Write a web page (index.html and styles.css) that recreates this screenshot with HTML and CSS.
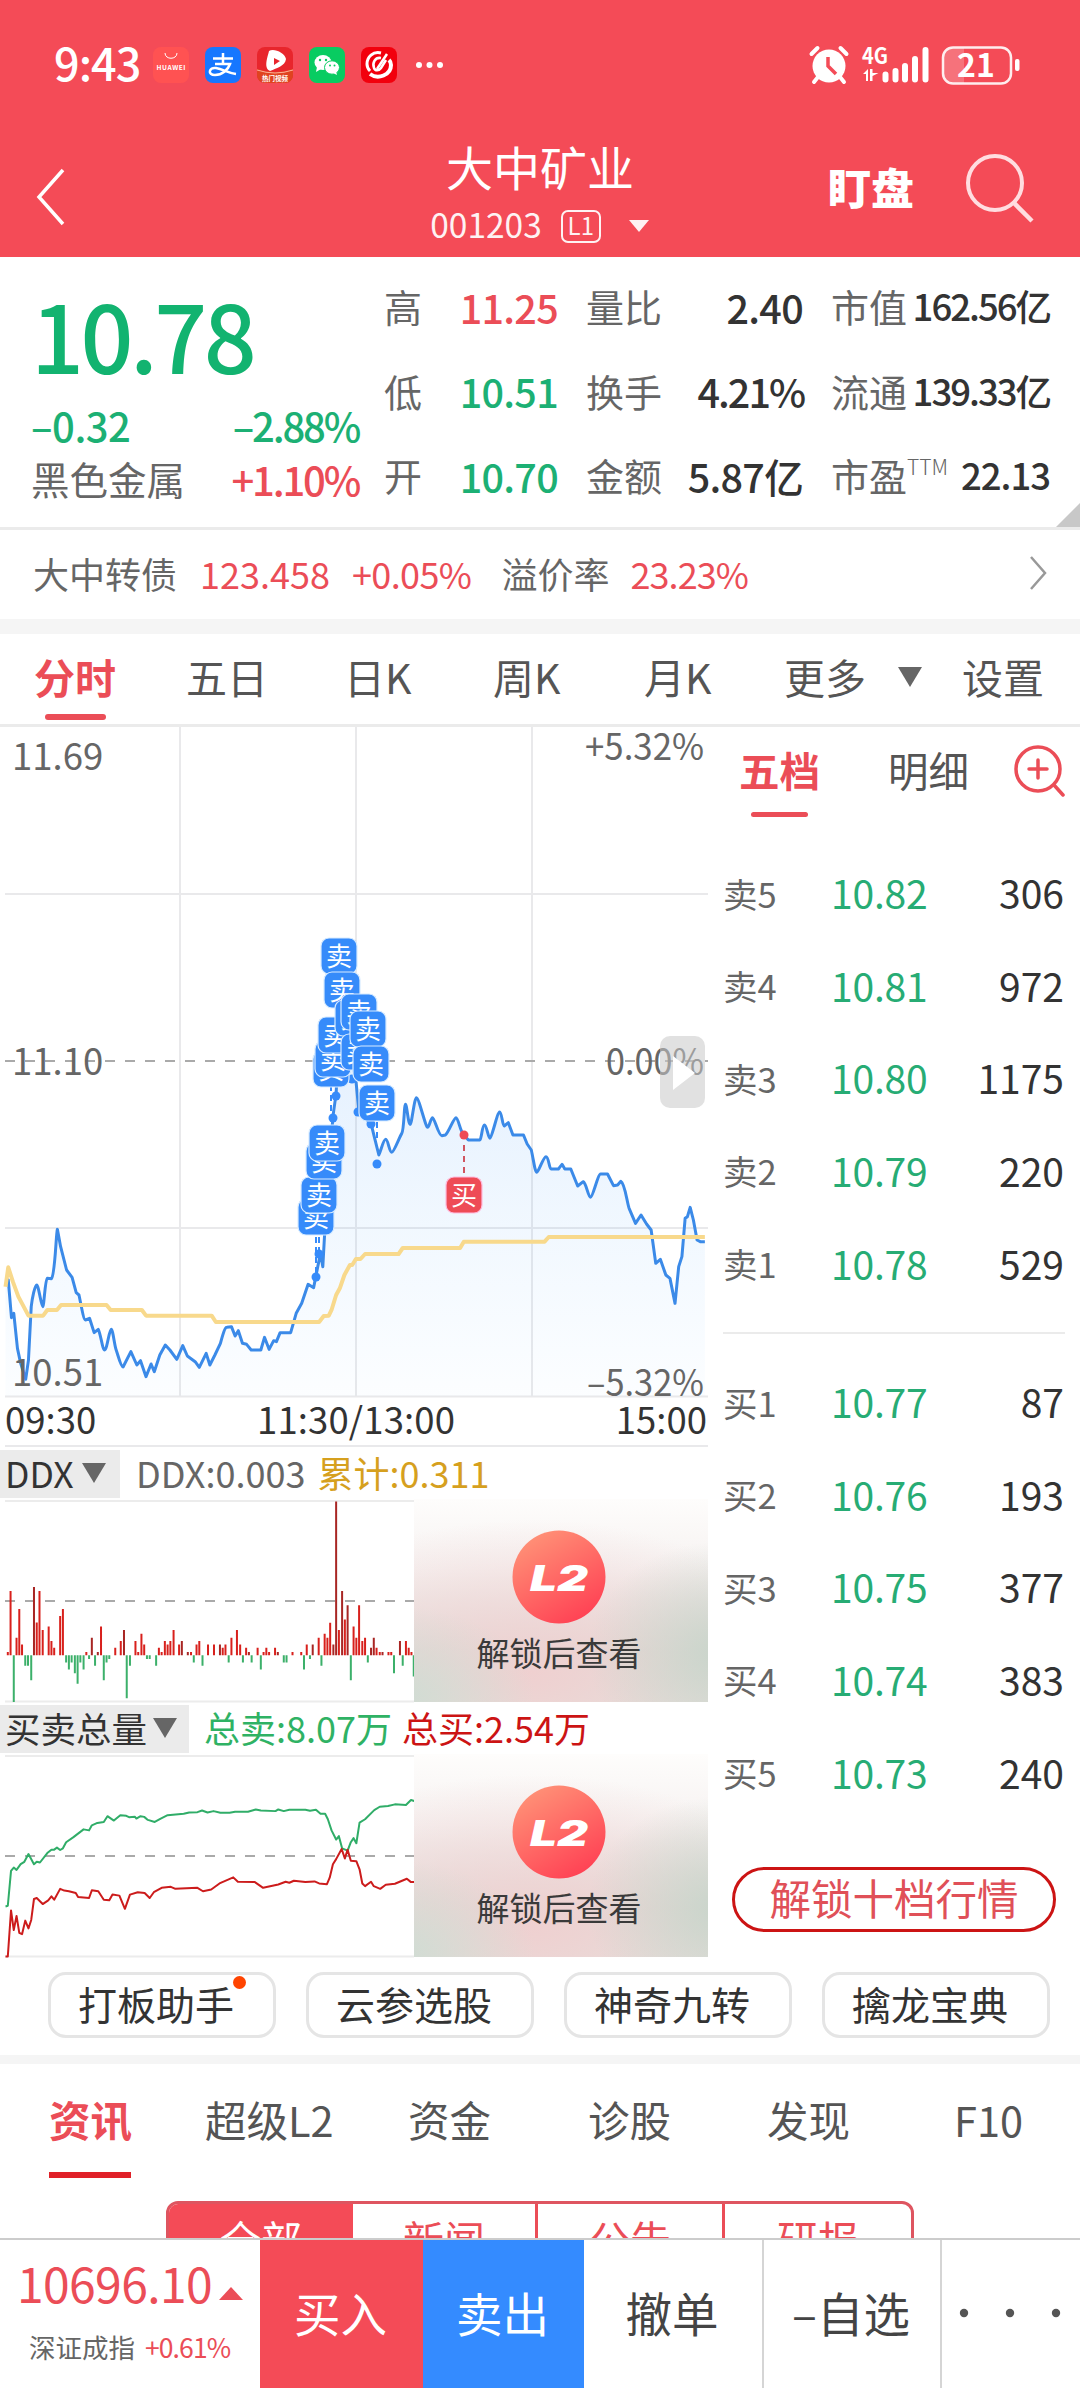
FILE: index.html
```html
<!DOCTYPE html>
<html lang="zh-CN">
<head>
<meta charset="utf-8">
<title>大中矿业 001203</title>
<link rel="stylesheet" href="styles.css">
</head>
<body>
<div class="app">
  <header class="head">
    <div class="status">
      <span class="clock">9:43</span>
      <div class="apps">
        <svg width="36" height="36" viewBox="0 0 36 36"><rect width="36" height="36" rx="8" fill="#ff5252"/><path d="M12 6c0 7 12 7 12 0" fill="none" stroke="#fff" stroke-width="1"/><text x="18" y="23" font-size="6.6" font-weight="700" fill="#fff" text-anchor="middle" textLength="29">HUAWEI</text></svg>
        <svg width="36" height="36" viewBox="0 0 36 36"><rect width="36" height="36" rx="8" fill="#1677ff"/><path d="M8 11.500h20M18 6v11M10 17h15c-2 6-8 11-15 11-8 0-6-8 1-7 7 1 12 5 20 6" fill="none" stroke="#fff" stroke-width="2.500"/></svg>
        <svg width="36" height="36" viewBox="0 0 36 36"><rect width="36" height="36" rx="8" fill="#e8252c"/><path d="M0 22q18 6 36 0v6a8 8 0 0 1-8 8H8a8 8 0 0 1-8-8z" fill="#e0431f"/><path d="M0 23q18 6 36 0" fill="none" stroke="#ffb199" stroke-width="1"/><path d="M12 4c5-3 16 2 17 8-1 7-9 9-16 12-7-3-2-15-1-20zm5 7v7l6-4z" fill="#fff" fill-rule="evenodd"/><text x="18" y="33.500" font-size="6.500" font-weight="700" fill="#fff" text-anchor="middle">热门视频</text></svg>
        <svg width="36" height="36" viewBox="0 0 36 36"><rect width="36" height="36" rx="8" fill="#08cc61"/><ellipse cx="14" cy="15.500" rx="8.500" ry="7.500" fill="#fff"/><path d="M8 20l-1 5 5-3z" fill="#fff"/><ellipse cx="23" cy="20.500" rx="7.500" ry="6.700" fill="#fff" stroke="#08cc61"/><path d="M24 26l4 2-1-4z" fill="#fff"/><g fill="#08cc61"><circle cx="11" cy="13" r="1.200"/><circle cx="17" cy="13" r="1.200"/><circle cx="21" cy="18.500" r="1"/><circle cx="25.500" cy="18.500" r="1"/></g></svg>
        <svg width="36" height="36" viewBox="0 0 36 36"><rect width="36" height="36" rx="8" fill="#f2000d"/><g fill="none" stroke="#fff"><path d="M20 6C12 4 6 10 6 17c0 3 1 5 3 7" stroke-width="3"/><path d="M9 27c8 6 21 1 21-9 0-3-1-4-2-5" stroke-width="4"/><path d="M20 11c-6-1-9 5-7 10 1 3 5 3 7 0l5-8" stroke-width="2.500"/><path d="M26 7L16 22" stroke-width="2.500"/></g></svg>
      </div>
      <svg class="more" width="30" height="8" viewBox="0 0 30 8"><g fill="#fff"><circle cx="4" cy="4" r="3"/><circle cx="14.500" cy="4" r="3"/><circle cx="25" cy="4" r="3"/></g></svg>
      <svg class="sys" width="212" height="42" viewBox="0 0 212 42">
        <g stroke="#fff" fill="none" stroke-linecap="round">
          <circle cx="20" cy="22" r="16.500" fill="#fff" stroke="none"/>
          <path d="M2.500 10l6-6M37.500 10l-6-6M9 33l-4 5M31 33l4 5" stroke-width="4"/>
          <path d="M19 13v9l8 8" stroke="#f44b57" stroke-width="3.500" stroke-linecap="butt"/>
          <path d="M76.500 30.500v5M86.500 27v8.500M96 22v13.500M106 15v20.500M116.500 6v29.500" stroke-width="6"/>
        </g>
        <text x="53" y="20" font-size="22" font-weight="700" fill="#fff" textLength="26" lengthAdjust="spacingAndGlyphs">4G</text>
        <path d="M54 30l5-5v12h-2V30zM61 25l0 12h2.500v-5l6-3h-6v-4z" fill="#fff"/>
        <path d="M155 4H144a10 10 0 0 0-10 10v15a10 10 0 0 0 10 10h11z" fill="#fff" opacity=".22"/>
        <rect x="134" y="3.500" width="68" height="36" rx="10" fill="none" stroke="#fff" stroke-width="2.500" opacity=".9"/>
        <rect x="206" y="15" width="4.500" height="12" rx="2" fill="#fff"/>
        <text x="167" y="33" font-size="32" font-weight="700" fill="#fff" text-anchor="middle">21</text>
      </svg>
    </div>
    <div class="nav">
      <svg class="back" width="32" height="60" viewBox="0 0 32 60"><path d="M28 3L4 30l24 27" fill="none" stroke="#fff" stroke-width="3.500"/></svg>
      <div class="title">
        <h1>大中矿业</h1>
        <div class="code"><span>001203</span><b class="lv">L1</b><i class="tri-w"></i></div>
      </div>
      <span class="watch">盯盘</span>
      <svg class="search" width="70" height="74" viewBox="0 0 70 74"><circle cx="29" cy="30" r="27" fill="none" stroke="#ffdde0" stroke-width="4"/><path d="M47 49l19 19" stroke="#ffdde0" stroke-width="4.500"/></svg>
    </div>
  </header>

  <section class="quote">
    <div class="main">
      <div class="price">10.78</div>
      <div class="pair green"><b>–0.32</b><b class="pc">–2.88%</b></div>
      <div class="pair"><span>黑色金属</span><b class="red pc">+1.10%</b></div>
    </div>
    <div class="stats">
      <div><span>高</span><b class="red">11.25</b></div><div><span>量比</span><b>2.40</b></div><div class="nar"><span>市值</span><b>162.56亿</b></div>
      <div><span>低</span><b class="green">10.51</b></div><div><span>换手</span><b class="pc">4.21%</b></div><div class="nar"><span>流通</span><b>139.33亿</b></div>
      <div><span>开</span><b class="green">10.70</b></div><div><span>金额</span><b>5.87亿</b></div><div class="nar"><span>市盈<sup>TTM</sup></span><b>22.13</b></div>
    </div>
    <i class="corner"></i>
  </section>
  <section class="bond">
    <span>大中转债</span><span class="red w1">123.458</span><span class="red w2">+0.05%</span><span class="w3">溢价率</span><span class="red w4">23.23%</span>
    <svg width="22" height="38" viewBox="0 0 22 38"><path d="M3 3l14 16L3 35" fill="none" stroke="#999" stroke-width="2.500"/></svg>
  </section>

  <nav class="periods">
    <b class="on">分时</b><span>五日</span><span>日K</span><span>周K</span><span>月K</span><span>更多</span><i class="tri-g"></i><span>设置</span>
  </nav>

  <div class="body">
    <div class="charts">
      <svg class="price-chart" width="708" height="720" viewBox="0 727 708 720">
        <defs><linearGradient id="area" x1="0" y1="0" x2="0" y2="1"><stop offset="0" stop-color="#358cf5" stop-opacity=".16"/><stop offset="1" stop-color="#58b0ff" stop-opacity=".02"/></linearGradient></defs>
        <path d="M180 727V1396M356 727V1396M532 727V1396M5 894H708M5 1228H708M5 1396.500H708M5 1446H708" stroke="#e9e9eb" stroke-width="2"/>
        <path d="M5 1061H708" stroke="#aaa" stroke-width="2" stroke-dasharray="10 10"/>
        <g transform="translate(0 1020) scale(.4592 .33333)" fill="none" stroke-linejoin="round">
          <path fill="url(#area)" d="M12 1128V800L18 780 25 893 30 880 38 985 45 1030 56 1078 62 1020 68 860 80 795 93 860 103 775 115 770 125 628 132 680 145 750 157 772 166 818 172 825 186 900 195 895 205 938 214 928 228 990 242 928 253 990 268 1041 285 995 298 1035 306 1022 318 1070 329 1032 336 1055 348 1005 360 975 370 990 385 1018 398 977 408 1008 425 1025 434 1042 449 1000 457 1035 468 1005 480 970 494 922 504 920 512 948 519 932 528 970 537 973 547 990 568 990 576 952 586 988 596 962 610 938 633 938 645 880 657 850 671 793 683 803 692 740 698 700 703 740 707 640 715 480 725 290 732 220 738 50 748 -120 758 50 775 180 782 280 808 310 815 350 825 405 840 358 853 397 865 365 875 340 883 253 893 313 907 233 918 280 931 322 942 293 962 347 970 345 993 293 1003 330 1020 360 1045 360 1055 315 1067 355 1088 276 1098 318 1107 308 1117 345 1140 345 1148 372 1157 390 1169 457 1189 410 1200 447 1243 447 1258 498 1270 485 1286 532 1308 462 1323 462 1336 497 1352 484 1360 505 1370 565 1384 610 1396 585 1418 630 1428 730 1438 718 1459 775 1470 850 1478 740 1485 710 1492 595 1503 562 1518 660 1535 665V1128z"/>
          <path class="ns" stroke="#3b8ae8" stroke-width="3" d="M15 790L18 780 25 893 30 880 38 985 45 1030 56 1078 62 1020 68 860C70 835 76 795 80 795S90 860 93 860 98 780 103 775L112 776C120 765 122 640 125 628L132 680 145 750 157 772 166 818 172 825C176 850 182 900 186 900L195 895 205 938 214 928C220 945 223 990 228 990S238 928 242 928 249 975 253 990 263 1041 268 1041L285 995 298 1035 306 1022 318 1070 329 1032 336 1055 348 1005 360 975 370 990 385 1018 398 977 408 1008 425 1025 434 1042 449 1000 457 1035 468 1005 480 970C486 940 490 922 494 922L504 920 512 948 519 932 528 970 537 973 547 990 568 990 576 952 586 988 596 962 602 965 610 938 633 938 645 880 657 850 671 793 683 803 692 740 698 700 703 740 707 640 715 480 725 290 732 220 738 50 748 -120 758 50 775 180 782 280 808 310 815 350 825 405C830 390 835 358 840 358S848 397 853 397 870 350 875 340 880 253 883 253 889 313 893 313 902 233 907 233 927 322 931 322 938 293 942 293 955 347 962 347L970 345C978 335 988 293 993 293S1002 335 1010 345L1020 360 1045 360C1049 355 1050 315 1055 315S1063 355 1067 355 1083 276 1088 276 1094 318 1098 318L1107 308 1117 345 1140 345 1148 372 1157 390C1162 420 1165 457 1169 457S1183 410 1189 410 1196 447 1200 447L1216 447 1224 433 1230 447 1243 447 1258 498 1270 485C1277 490 1281 532 1286 532S1302 462 1308 462L1323 462 1336 497 1345 495 1352 484C1361 490 1365 545 1370 565L1384 610 1396 585 1408 612 1418 630 1428 730 1438 718 1450 765 1459 775 1470 850 1478 740 1485 710 1492 595 1497 590 1503 562 1510 600 1518 660 1525 665 1535 665"/>
          <path class="ns" stroke="#f8d98c" stroke-width="4" d="M12 800L18 742 28 785 40 830 62 887H94L103 870H124L133 855H232L241 870H309L318 887H461L470 906H695L705 888 716 887 722 870 732 825 740 805 750 765 762 735 767 735 775 717H785L795 702H868L877 684H1002L1010 665H1186L1195 651H1535"/>
        </g>
        <g class="axis">
          <text x="12" y="770">11.69</text><text x="704" y="760" text-anchor="end" textLength="119" lengthAdjust="spacingAndGlyphs">+5.32%</text>
          <text x="12" y="1075">11.10</text><text x="704" y="1075" text-anchor="end" textLength="98" lengthAdjust="spacingAndGlyphs">0.00%</text>
          <text x="12" y="1386">10.51</text><text x="704" y="1396" text-anchor="end" textLength="117" lengthAdjust="spacingAndGlyphs">–5.32%</text>
        </g>
        <g class="axis time"><text x="5" y="1434">09:30</text><text x="356" y="1434" text-anchor="middle" textLength="198">11:30/13:00</text><text x="707" y="1434" text-anchor="end">15:00</text></g>
        <path d="M331 1085V1118M316 1237V1272M319 1237V1250M377 1122V1140" stroke="#368bfa" stroke-width="2" stroke-dasharray="6 4"/>
        <g fill="#368bfa"><circle cx="336" cy="1096" r="4.500"/><circle cx="333" cy="1118" r="4.500"/><circle cx="319" cy="1254" r="4.500"/><circle cx="316" cy="1277" r="4.500"/><circle cx="377" cy="1164" r="4.500"/><circle cx="371" cy="1124" r="4.500"/><circle cx="358" cy="1112" r="4.500"/><circle cx="352" cy="1079" r="4.500"/></g>
        <circle cx="464" cy="1135" r="4.500" fill="#ee4b56"/><path d="M464 1145V1177" stroke="#d05560" stroke-width="2" stroke-dasharray="6 5"/>
        <g class="tag">
          <g transform="translate(316 1217)"><rect/><text>卖</text></g>
          <g transform="translate(319 1195)"><rect/><text>卖</text></g>
          <g transform="translate(324 1161)"><rect/><text>卖</text></g>
          <g transform="translate(327 1143)"><rect/><text>卖</text></g>
          <g transform="translate(331 1069)"><rect/><text>卖</text></g>
          <g transform="translate(333 1059)"><rect/><text>卖</text></g>
          <g transform="translate(336 1035)"><rect/><text>卖</text></g>
          <g transform="translate(339 956)"><rect/><text>卖</text></g>
          <g transform="translate(342 990)"><rect/><text>卖</text></g>
          <g transform="translate(353 1018)"><rect/><text>卖</text></g>
          <g transform="translate(359 1012)"><rect/><text>卖</text></g>
          <g transform="translate(359 1052)"><rect/><text>卖</text></g>
          <g transform="translate(368 1029)"><rect/><text>卖</text></g>
          <g transform="translate(371 1064)"><rect/><text>卖</text></g>
          <g transform="translate(377 1103)"><rect/><text>卖</text></g>
          <g transform="translate(464 1195)" class="buy"><rect/><text>买</text></g>
        </g>
        <rect x="660" y="1036" width="45" height="72" rx="10" fill="#c8c8c8" opacity=".55"/><path d="M673 1056L695 1073 673 1090z" fill="#fff"/>
      </svg>

      <div class="ind"><span class="pick">DDX<i class="tri-g"></i></span><span class="gr">DDX:0.003</span><span class="gold">累计:0.311</span></div>
      <div class="row">
        <svg width="414" height="204" viewBox="0 1499 414 204">
          <path d="M5 1501H414M5 1701.500H414" stroke="#ececec" stroke-width="2"/><path d="M5 1601H414" stroke="#aaa" stroke-width="2" stroke-dasharray="10 10"/>
          <g transform="translate(0 1440) scale(.4592 .338)" stroke-width="2">
            <path class="ns" stroke="#d8201c" d="M17 637V627M23 637V447M36 637V585M42 637V500M48 637V605M80 637V540M86 637V447M93 637V562M106 637V552M112 637V595M118 637V615M131 637V521M137 637V500M188 637V627M220 637V552M251 637V615M263 637V595M295 637V595M301 637V627M308 637V573M314 637V605M346 637V615M352 637V627M359 637V595M365 637V605M371 637V595M378 637V562M390 637V605M416 637V627M428 637V605M434 637V595M453 637V605M466 637V605M485 637V615M491 637V605M504 637V585M516 637V562M523 637V605M536 637V615M561 637V615M574 637V627M580 637V615M586 637V627M599 637V615M637 637V627M656 637V627M668 637V605M694 637V585M707 637V573M713 637V585M719 637V541M738 637V562M751 637V531M770 637V552M776 637V585M782 637V489M789 637V595M795 637V585M820 637V615M827 637V627M846 637V627M852 637V627M884 637V595M890 637V615M896 637V627"/>
            <path class="ns" stroke="#a82624" d="M74 637V435M200 637V585M213 637V627M270 637V562M396 637V595M409 637V627M479 637V605M542 637V627M605 637V627M681 637V605M726 637V605M732 637V182M745 637V447M757 637V489M808 637V615M814 637V585M833 637V627M871 637V595"/>
            <path class="ns" stroke="#3cb06a" d="M30 637V775M55 637V668M61 637V668M68 637V711M144 637V658M150 637V679M156 637V658M163 637V690M169 637V721M175 637V658M182 637V679M194 637V648M207 637V668M226 637V711M232 637V658M238 637V648M276 637V764M283 637V668M320 637V648M326 637V648M340 637V668M422 637V658M441 637V668M498 637V658M529 637V658M548 637V658M568 637V679M618 637V658M624 637V658M662 637V679M675 637V648M700 637V668M764 637V711M801 637V658M858 637V690M877 637V668M901 637V700"/>
          </g>
        </svg>
        <div class="lock"><svg width="94" height="94" viewBox="0 0 94 94"><defs><linearGradient id="ball" x1=".2" y1="0" x2=".8" y2="1"><stop offset="0" stop-color="#ff9478"/><stop offset="1" stop-color="#ff3d52"/></linearGradient></defs><circle cx="47" cy="47" r="46.500" fill="url(#ball)"/><text class="l2" x="18" y="61" textLength="58" lengthAdjust="spacingAndGlyphs">L2</text></svg><span>解锁后查看</span></div>
      </div>
      <div class="ind two"><span class="pick">买卖总量<i class="tri-g"></i></span><span class="g2">总卖:8.07万</span><span class="r2">总买:2.54万</span></div>
      <div class="row">
        <svg width="414" height="204" viewBox="0 1754 414 204">
          <path d="M5 1756H414M5 1956.500H414" stroke="#ececec" stroke-width="2"/><path d="M5 1856H414" stroke="#aaa" stroke-width="2" stroke-dasharray="10 10"/>
          <g transform="translate(0 1440) scale(.4592 .338)" stroke-width="2" fill="none" stroke-linejoin="round">
            <path class="ns" stroke="#30ad68" d="M12 1380L17 1378 24 1275 30 1265 36 1272 45 1255 53 1248 62 1225 74 1255 80 1248 87 1250 103 1222 112 1212 118 1212 124 1206 131 1213 137 1208 144 1190 160 1175 182 1152 194 1155 200 1140 212 1133 226 1130 234 1113 248 1126 262 1110 275 1112 281 1116 294 1115 297 1120 306 1113 314 1115 322 1124 337 1130 350 1120 365 1110 400 1106 412 1102 430 1101 440 1096 452 1102 465 1098 480 1103 500 1103 512 1100 540 1100 557 1093 568 1096 600 1098 606 1093 618 1098 630 1094 665 1094 675 1097 688 1094 698 1106 708 1106 714 1122 722 1155 732 1182 738 1172 745 1208 757 1215 764 1190 770 1178 776 1193 783 1132 795 1122 815 1095 827 1085 845 1083 860 1078 884 1080 895 1065 902 1068"/>
            <path class="ns" stroke="#cc1c1c" d="M12 1528L17 1528 24 1392 30 1450 36 1408 42 1458 48 1462 55 1422 62 1445 68 1420 74 1358 80 1355 93 1373 105 1362 112 1350 118 1360 131 1328 140 1333 150 1335 165 1340 170 1352 194 1355 200 1332 214 1335 226 1360 238 1362 245 1345 260 1348 272 1387 283 1345 300 1338 315 1340 326 1355 335 1338 352 1325 372 1322 382 1328 430 1325 442 1335 460 1330 478 1312 508 1294 518 1307 555 1308 573 1325 606 1315 622 1307 630 1310 640 1304 665 1308 685 1306 695 1312 712 1314 718 1295 725 1255 732 1240 744 1210 751 1238 757 1212 764 1245 776 1246 783 1270 789 1312 795 1320 808 1307 814 1320 828 1328 840 1316 860 1313 886 1298 895 1308 902 1308"/>
          </g>
        </svg>
        <div class="lock"><svg width="94" height="94" viewBox="0 0 94 94"><circle cx="47" cy="47" r="46.500" fill="url(#ball)"/><text class="l2" x="18" y="61" textLength="58" lengthAdjust="spacingAndGlyphs">L2</text></svg><span>解锁后查看</span></div>
      </div>
    </div>

    <aside class="book">
      <div class="btabs"><b class="on">五档</b><span>明细</span><svg width="54" height="54" viewBox="0 0 54 54"><g fill="none" stroke="#eb4d57" stroke-width="3.500" stroke-linecap="round"><circle cx="25" cy="25" r="22"/><path d="M16 25h18M25 16v18M41 41l9 10"/></g></svg></div>
      <div class="lv5 sell">
        <div><span>卖5</span><em>10.82</em><b>306</b></div>
        <div><span>卖4</span><em>10.81</em><b>972</b></div>
        <div><span>卖3</span><em>10.80</em><b>1175</b></div>
        <div><span>卖2</span><em>10.79</em><b>220</b></div>
        <div><span>卖1</span><em>10.78</em><b>529</b></div>
      </div>
      <div class="lv5 bid">
        <div><span>买1</span><em>10.77</em><b>87</b></div>
        <div><span>买2</span><em>10.76</em><b>193</b></div>
        <div><span>买3</span><em>10.75</em><b>377</b></div>
        <div><span>买4</span><em>10.74</em><b>383</b></div>
        <div><span>买5</span><em>10.73</em><b>240</b></div>
      </div>
      <div class="unlock">解锁十档行情</div>
    </aside>
  </div>

  <div class="tools"><span>打板助手<i class="dot"></i></span><span>云参选股</span><span>神奇九转</span><span>擒龙宝典</span></div>

  <nav class="info"><b class="on">资讯</b><span>超级L2</span><span>资金</span><span>诊股</span><span>发现</span><span>F10</span></nav>
  <div class="seg-wrap"><div class="seg"><span class="sel">全部</span><span>新闻</span><span>公告</span><span>研报</span></div></div>

  <footer class="foot">
    <div class="idx"><div class="num">10696.10<i class="tri-r"></i></div><div class="nm"><span>深证成指</span><span class="red">+0.61%</span></div></div>
    <div class="f buy">买入</div><div class="f sellb">卖出</div><div class="f">撤单</div><div class="f ln">–自选</div>
    <div class="f ln"><svg width="104" height="10" viewBox="0 0 104 10"><g fill="#555"><circle cx="6" cy="5" r="4.200"/><circle cx="52" cy="5" r="4.200"/><circle cx="98" cy="5" r="4.200"/></g></svg></div>
  </footer>
</div>
</body>
</html>
```
FILE: styles.css
```css
* { box-sizing: border-box; margin: 0; padding: 0; }
body { background: #fff; font-family: "Noto Sans CJK SC", "Noto Sans", sans-serif; color: #666; line-height: 1; }
i, em { font-style: normal; }
svg { display: block; flex: none; overflow: visible; }
.app { width: 1080px; height: 2388px; overflow: hidden; display: flex; flex-direction: column; background: #fff; }
.app > * { flex: none; }
.red { color: #eb4d57 !important; }
.green { color: #1cb074 !important; }
span, b, em { white-space: nowrap; }

.head { height: 257px; background: #f44b57; color: #fff; }
.status { height: 130px; display: flex; align-items: center; padding-left: 54px; padding-right: 59px; }
.clock { font-size: 45px; font-weight: 500; width: 99px; letter-spacing: -1px; margin-top: -7px; }
.apps { display: flex; gap: 16px; }
.more { margin-left: 18px; }
.sys { margin-left: auto; margin-right: 0; }
.nav { height: 127px; display: grid; grid-template-columns: 380px 320px 1fr auto; padding: 0 44px 0 35px; }
.back { margin-top: 37px; }
.title { margin-left: -35px; display: flex; flex-direction: column; align-items: center; width: 320px; padding-top: 12px; }
h1 { font-size: 47px; font-weight: 400; line-height: 48px; }
.code { display: flex; align-items: center; height: 34px; margin-top: 19px; margin-left: -1px; font-size: 33.500px; opacity: .93; }
.code span { margin-top: -5px; }
.lv { width: 40px; height: 33px; border: 2px solid #fff; border-radius: 7px; font-size: 24px; font-weight: 400; line-height: 26px; text-align: center; margin: 0 28px 0 19px; }
.tri-w { border: 10px solid transparent; border-top: 12px solid #fff; border-bottom: 0; }
.watch { font-size: 43px; font-weight: 900; margin: 35px 0 0 93px; letter-spacing: 0; }
.search { margin-top: 23px; }

.quote { position: relative; height: 273px; border-bottom: 3px solid #ebebeb; display: flex; padding-left: 31px; }
.main { width: 326px; }
.price { font-size: 93px; font-weight: 500; color: #12b370; letter-spacing: -3.500px; height: 141px; line-height: 94px; padding-top: 30px; }
.pair { display: flex; justify-content: space-between; height: 53px; align-items: center; font-size: 38.500px; }
.pair b { font-weight: 500; font-size: 40px; letter-spacing: -.5px; }
.pair b.pc { letter-spacing: -2.200px; margin-right: -2px; }
.pair.green { height: 54px; }
.stats { margin-left: 27px; display: grid; grid-template-columns: 174px 217px 218px; column-gap: 28px; grid-template-rows: repeat(3, 84.500px); padding-top: 7px; }
.stats > div { display: flex; align-items: center; justify-content: space-between; font-size: 38px; }
.stats b { font-weight: 500; font-size: 39.500px; color: #333; letter-spacing: -.7px; }
.stats b.pc { letter-spacing: -2px; margin-right: -1px; }
.stats .nar b { font-size: 36.500px; letter-spacing: -2px; margin-right: -1px; }
.stats .nar:last-child b { letter-spacing: -1px; }
sup { font-size: 21px; font-weight: 300; vertical-align: 16px; line-height: 0; }
.corner { position: absolute; right: 0; bottom: 0; border-left: 24px solid transparent; border-bottom: 24px solid #c8c8c8; }
.bond { height: 89px; display: flex; align-items: center; padding: 0 30px 4px 33px; font-size: 36px; }
.bond svg { margin-left: auto; }
.w1 { margin: 0 22px 0 23px; }
.w2 { margin-right: 30px; letter-spacing: -.6px; }
.w3 { margin-right: 21px; }
.w4 { letter-spacing: -.9px; }

.periods { height: 108px; border-top: 15px solid #f5f5f5; border-bottom: 3px solid #ebebeb; display: grid; grid-template-columns: 152px 158px 149px 151px 140px 114px 64px 1fr; padding-left: 34px; align-items: center; font-size: 41px; color: #555; }
.periods > * { margin-top: -5px; }
.periods .on { position: relative; }
.on { color: #eb4d57; font-weight: 700; }
.periods .on::after { content: ""; position: absolute; left: 11px; top: 58px; width: 61px; height: 6px; border-radius: 3px; background: #eb4d57; }
.tri-g { display: inline-block; width: 0; border: 12px solid transparent; border-top: 20px solid #666; border-bottom: 0; }

.body { display: flex; height: 1231px; }
.charts { width: 708px; }
.axis text { font-size: 36.500px; fill: #666; }
.axis.time text { fill: #333; }
.ns { vector-effect: non-scaling-stroke; }
.tag rect { x: -18px; y: -18px; width: 36px; height: 36px; rx: 8px; fill: #368bfa; stroke: #d8ecff; stroke-width: 1.200; }
.tag text { font-size: 26px; fill: #fff; text-anchor: middle; transform: translateY(9.500px); }
.tag .buy rect { fill: #ee4b56; stroke: #fbd; }
.ind { height: 52px; padding-top: 3px; display: flex; font-size: 36px; line-height: 44px; }
.pick { background: #ebebeb; width: 120px; height: 48px; padding-left: 5px; color: #333; display: flex; align-items: center; gap: 8px; line-height: 40px; margin-right: 16px; font-size: 35.500px; }
.pick { padding-bottom: 2px; }
.ind.two { height: 51px; padding-top: 2px; }
.two .pick { width: 189px; margin-right: 15px; gap: 6px; }
.gold { color: #d6a01e; margin-left: 12px; }
.g2 { color: #2fb264; }
.r2 { color: #cc1414; margin-left: 10px; }
.row { display: flex; height: 204px; }
.lock { width: 294px; height: 203px; display: flex; flex-direction: column; align-items: center; padding: 31px 4px 0 0; gap: 12px; color: #3a3a3a; font-size: 33px;
  background: radial-gradient(ellipse 45% 55% at 104% 76%, #c9d5cb, transparent), radial-gradient(ellipse 45% 45% at -4% 98%, #d0dcd3, transparent), radial-gradient(ellipse 95% 75% at 40% 85%, #efd0d0, transparent), linear-gradient(#fefdfc, #f6f2f1 35%, #e2dfdc 75%, #e3e6e1); }
.l2 { font: italic 900 35px Inter, sans-serif; fill: #fff; }

.book { width: 372px; padding-left: 15px; }
.btabs { display: flex; padding: 13px 0 0 16px; height: 122px; font-size: 40.500px; color: #555; }
.btabs > b, .btabs > span { margin-top: 10px; }
.btabs > span { margin-left: 68px; }
.btabs svg { margin-left: 44px; margin-top: 4px; }
.btabs .on { position: relative; height: 60px; }
.btabs .on::after { content: ""; position: absolute; left: 12px; top: 62px; width: 57px; height: 5px; border-radius: 3px; background: #eb4d57; }
.lv5 { width: 342px; }
.lv5 > div { height: 92.600px; display: grid; grid-template-columns: 108px 1fr auto; align-items: center; padding: 0 1px 5px 0; font-size: 34.500px; }
.lv5 em { font-size: 39px; color: #27ac74; letter-spacing: -.2px; }
.lv5 b { font-size: 39px; font-weight: 400; color: #333; }
.sell { height: 485px; border-bottom: 2px solid #ebebeb; }
.bid { padding-top: 24px; height: 533px; }
.unlock { width: 324px; height: 65px; margin-left: 9px; border: 3px solid #cc1414; border-radius: 33px; color: #e05058; font-size: 41.500px; text-align: center; line-height: 55px; }

.tools { height: 97px; border-bottom: 0; display: flex; gap: 30px; padding: 14px 30px 0 48px; }
.tools span { position: relative; width: 228px; height: 66px; border: 3px solid #e5e5e5; border-radius: 18px; font-size: 39px; color: #333; display: flex; justify-content: center; padding-top: 8px; padding-right: 12px; line-height: 40px; }
.dot { position: absolute; left: 182px; top: 1px; width: 13px; height: 13px; border-radius: 50%; background: #ff4400; }
.info { height: 126px; border-top: 9px solid #f5f5f5; display: grid; grid-template-columns: 156px 203px 180px 179px 187px 1fr; padding: 35px 0 0 49px; font-size: 41.500px; color: #555; }
.info .on { position: relative; }
.info .on::after { content: ""; position: absolute; left: 0; top: 73px; width: 82px; height: 6px; background: #e02028; }
.seg-wrap { height: 57px; padding: 20px 166px 0; overflow: hidden; }
.seg { height: 80px; border: 3px solid #de5560; border-radius: 12px; display: grid; grid-template-columns: 184px 185px 187px 1fr; overflow: hidden; color: #eb4d57; font-size: 41px; text-align: center; }
.seg span { padding-top: 14px; border-right: 3px solid #eb4d57; }
.seg span:last-child { border: 0; }
.seg .sel { background: #f44b57; color: #fff; border: 0; }
.foot { height: 150px; border-top: 2px solid #ccc; display: grid; grid-template-columns: 260px 163px 161px 178px 178px 140px; background: #fff; }
.f { display: flex; align-items: center; justify-content: center; font-size: 46.500px; color: #444; padding: 0 2px 3px 0; }
.f.ln { border-left: 2px solid #d5d5d5; }
.f.buy { background: #f44b57; color: #fff; }
.f.sellb { background: #348bff; color: #fff; }
.num { color: #eb4d57; font-size: 48px; letter-spacing: -.6px; padding: 18px 0 0 17px; display: flex; }
.tri-r { border: 12px solid transparent; border-bottom: 13px solid #eb4d57; border-top: 0; height: 0; margin: 29px 0 0 7px; }
.nm { font-size: 26.500px; padding: 28px 0 0 29px; display: flex; gap: 10px; }
.nm .red { letter-spacing: -.9px; }
```
